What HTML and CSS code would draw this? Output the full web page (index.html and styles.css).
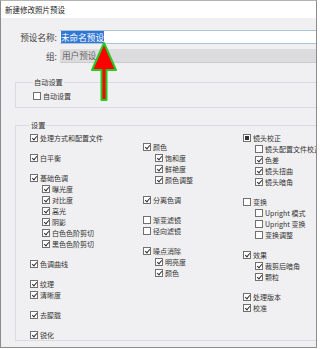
FILE: index.html
```html
<!DOCTYPE html>
<html lang="zh-CN">
<head>
    <meta charset="UTF-8">
    <meta name="viewport" content="width=device-width, initial-scale=1.0">
    <title>新建修改照片预设</title>
    <link rel="stylesheet" href="styles.css">
</head>
<body>
    <div class="window">
        <div class="titlebar">新建修改照片预设</div>

        <div class="content">
            <div class="field-row">
                <label class="field-label">预设名称:</label>
                <div class="text-input"><span class="selected">未命名预设</span></div>
            </div>
            <div class="field-row group-row">
                <label class="field-label">组:</label>
                <div class="select-box">用户预设</div>
            </div>

            <fieldset class="group auto-group">
                <legend>自动设置</legend>
                <div class="check"><span class="box"></span>自动设置</div>
            </fieldset>

            <fieldset class="group settings-group">
                <legend>设置</legend>
                <div class="columns">
                    <div class="column">
                        <div class="block">
                            <div class="check"><span class="box on"></span>处理方式和配置文件</div>
                        </div>
                        <div class="block">
                            <div class="check"><span class="box on"></span>白平衡</div>
                        </div>
                        <div class="block">
                            <div class="check"><span class="box on"></span>基础色调</div>
                            <div class="check sub"><span class="box on"></span>曝光度</div>
                            <div class="check sub"><span class="box on"></span>对比度</div>
                            <div class="check sub"><span class="box on"></span>高光</div>
                            <div class="check sub"><span class="box on"></span>阴影</div>
                            <div class="check sub"><span class="box on"></span>白色色阶剪切</div>
                            <div class="check sub"><span class="box on"></span>黑色色阶剪切</div>
                        </div>
                        <div class="block">
                            <div class="check"><span class="box on"></span>色调曲线</div>
                        </div>
                        <div class="block">
                            <div class="check"><span class="box on"></span>纹理</div>
                            <div class="check"><span class="box on"></span>清晰度</div>
                        </div>
                        <div class="block">
                            <div class="check"><span class="box on"></span>去朦胧</div>
                        </div>
                        <div class="block">
                            <div class="check"><span class="box on"></span>锐化</div>
                        </div>
                    </div>

                    <div class="column middle">
                        <div class="block">
                            <div class="check"><span class="box on"></span>颜色</div>
                            <div class="check sub"><span class="box on"></span>饱和度</div>
                            <div class="check sub"><span class="box on"></span>鲜艳度</div>
                            <div class="check sub"><span class="box on"></span>颜色调整</div>
                        </div>
                        <div class="block">
                            <div class="check"><span class="box on"></span>分离色调</div>
                        </div>
                        <div class="block">
                            <div class="check"><span class="box"></span>渐变滤镜</div>
                            <div class="check"><span class="box"></span>径向滤镜</div>
                        </div>
                        <div class="block">
                            <div class="check"><span class="box on"></span>噪点消除</div>
                            <div class="check sub"><span class="box on"></span>明亮度</div>
                            <div class="check sub"><span class="box on"></span>颜色</div>
                        </div>
                    </div>

                    <div class="column">
                        <div class="block">
                            <div class="check"><span class="box part"></span>镜头校正</div>
                            <div class="check sub"><span class="box"></span>镜头配置文件校正</div>
                            <div class="check sub"><span class="box on"></span>色差</div>
                            <div class="check sub"><span class="box on"></span>镜头扭曲</div>
                            <div class="check sub"><span class="box on"></span>镜头暗角</div>
                        </div>
                        <div class="block">
                            <div class="check"><span class="box"></span>变换</div>
                            <div class="check sub"><span class="box"></span>Upright 模式</div>
                            <div class="check sub"><span class="box"></span>Upright 变换</div>
                            <div class="check sub"><span class="box"></span>变换调整</div>
                        </div>
                        <div class="block">
                            <div class="check"><span class="box on"></span>效果</div>
                            <div class="check sub"><span class="box on"></span>裁剪后暗角</div>
                            <div class="check sub"><span class="box on"></span>颗粒</div>
                        </div>
                        <div class="block">
                            <div class="check"><span class="box on"></span>处理版本</div>
                            <div class="check"><span class="box on"></span>校准</div>
                        </div>
                    </div>
                </div>
            </fieldset>
        </div>

        <!-- annotation arrow pointing at the name field -->
        <svg class="arrow" width="317" height="348" viewBox="0 0 317 348">
            <polygon points="104,43 92,70 101.5,70 101.5,100 106.5,100 106.5,70 116,70"
                     fill="#ff0000" stroke="#22cc22" stroke-width="2" stroke-linejoin="round"/>
        </svg>
    </div>
</body>
</html>
```

FILE: styles.css
```css
body {
    margin: 0;
    padding: 0;
    background-color: #fff;
    font-family: "Noto Sans CJK SC", "Noto Sans", sans-serif;
    color: #333;
}

.window {
    position: relative;
    width: 317px;
    height: 348px;
    box-sizing: border-box;
    border: 1px solid #8c8c8c;
    border-top-color: #b4b4b4;
    display: flex;
    flex-direction: column;
    overflow: hidden;
}

.titlebar {
    height: 17px;
    line-height: 17px;
    padding-left: 4px;
    background-color: #fff;
    font-size: 7.5px;
    color: #222;
    flex-shrink: 0;
}

.content {
    flex: 1;
    background-color: #f0eff1;
    padding-top: 12px;
}

.field-row {
    display: flex;
    height: 14px;
}

.group-row {
    margin-top: 5px;
}

.field-label {
    width: 56px;
    margin-right: 3px;
    text-align: right;
    font-size: 8.6px;
    line-height: 14px;
    color: #444;
}

.text-input {
    flex: 1;
    box-sizing: border-box;
    background-color: #fff;
    border-top: 1px solid #a9c5dc;
    border-bottom: 1px solid #a9c5dc;
    padding-left: 1px;
}

.selected {
    display: inline-block;
    height: 12px;
    line-height: 12px;
    font-size: 8.6px;
    background-color: #3377d4;
    color: #fff;
    vertical-align: top;
}

.select-box {
    flex: 1;
    box-sizing: border-box;
    background-color: #dcdbdd;
    border-bottom: 1px solid #cbcacc;
    padding-left: 2px;
    font-size: 8.6px;
    line-height: 13px;
    color: #666;
}

.group {
    border: 1px solid #dcdadf;
    margin: 0 -10px 0 14px;
    padding: 0;
}

.group legend {
    padding: 0 1px;
    font-size: 7.2px;
    line-height: 10px;
    color: #333;
}

.auto-group {
    margin-top: 14px;
    padding: 3px 0 6px 17px;
}

.settings-group {
    margin-top: 12px;
    padding: 2px 0 0 14px;
}

.columns {
    display: grid;
    grid-template-columns: 113px 100px 1fr;
}

.column.middle {
    padding-top: 9px;
}

.block + .block {
    margin-top: 9px;
}

.check {
    display: flex;
    align-items: center;
    height: 11px;
    font-size: 7px;
    white-space: nowrap;
    color: #333;
}

.check.sub {
    padding-left: 12px;
}

.box {
    position: relative;
    width: 8px;
    height: 8px;
    box-sizing: border-box;
    border: 1px solid #707070;
    background-color: #fff;
    margin-right: 2px;
    flex-shrink: 0;
}

.box.on::after {
    content: "";
    position: absolute;
    left: 2px;
    top: 0;
    width: 2px;
    height: 4px;
    border-right: 1px solid #333;
    border-bottom: 1px solid #333;
    transform: rotate(40deg);
}

.box.part::after {
    content: "";
    position: absolute;
    left: 1px;
    top: 1px;
    width: 4px;
    height: 4px;
    background-color: #333;
}

.arrow {
    position: absolute;
    left: -1px;
    top: -1px;
    pointer-events: none;
}
```
